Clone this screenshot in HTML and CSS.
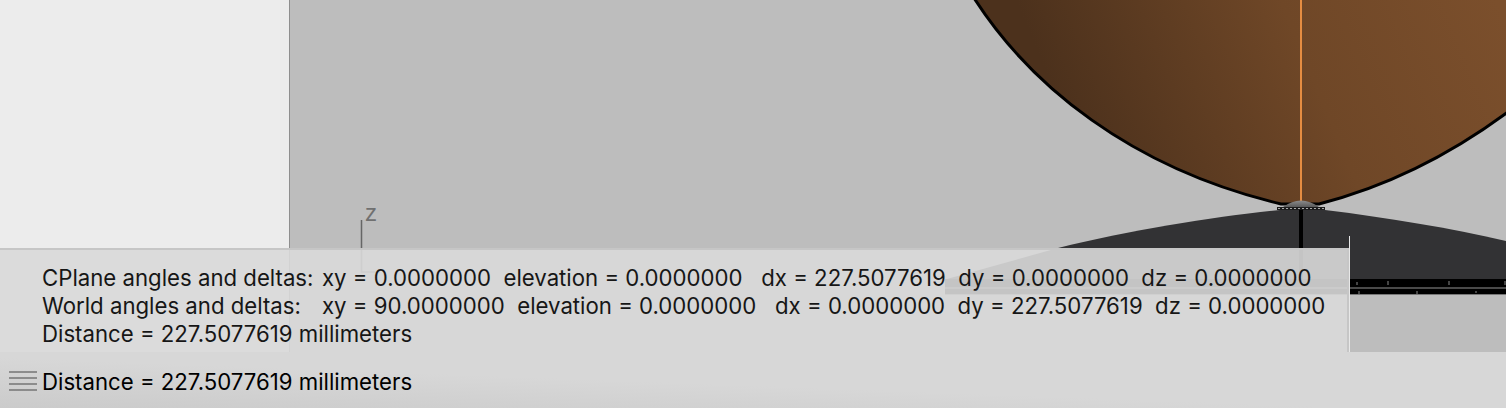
FILE: index.html
```html
<!DOCTYPE html>
<html lang="en">
<head>
  <meta charset="UTF-8">
  <title>Distance</title>
  <link rel="stylesheet" href="styles.css">
</head>
<body>
  <div class="app">
    <div class="workspace">
      <div class="sidebar"></div>

      <!-- Viewport: svg uses page coordinates -->
      <div class="viewport">
        <svg class="scene" viewBox="290 0 1216 352" width="1216" height="352">
          <defs>
            <linearGradient id="bowl" gradientUnits="userSpaceOnUse" x1="1070" y1="130" x2="1480" y2="-40">
              <stop offset="0" stop-color="#4c311c"/>
              <stop offset="0.55" stop-color="#6f4727"/>
              <stop offset="1" stop-color="#7b4f2c"/>
            </linearGradient>
            <linearGradient id="cap" x1="0" y1="0" x2="0" y2="1">
              <stop offset="0" stop-color="#8c8c8c"/>
              <stop offset="1" stop-color="#5a5a5a"/>
            </linearGradient>
          </defs>

          <!-- axis -->
          <path d="M361.500 220V272H380" class="axis"/>
          <text x="365" y="221" class="axis-label">z</text>

          <!-- lower disc and base -->
          <path d="M947 279L1058 248C1130 230 1220 216 1280 210H1325C1390 218 1450 228 1506 241V279Z" fill="#323234"/>
          <rect x="945" y="279" width="561" height="16" fill="#000"/>
          <rect x="945" y="287" width="561" height="2" fill="#4a4a4a"/>
          <rect x="945" y="294" width="561" height="1" fill="#777"/>
          <path d="M1357 282v3M1388 281v4M1449 281v4M1505 281v4M1359 291v3M1417 291v3M1476 291v2" stroke="#888" fill="none"/>
          <rect x="1299" y="208" width="4" height="71" fill="#000"/>

          <!-- bowl -->
          <path d="M974 -2C1030 85 1130 168 1281 204L1319 204C1390 186 1450 155 1508 112V-2Z" fill="url(#bowl)" stroke="#000" stroke-width="3"/>
          <rect x="1300" y="0" width="2" height="201" fill="#e58d42"/>

          <!-- hub -->
          <path d="M1283 207Q1301 194 1319 207Z" fill="url(#cap)"/>
          <rect x="1277" y="207" width="48" height="3" fill="#1c1c1c"/>
          <path d="M1278 208.500H1324" stroke="#aaa" stroke-dasharray="2 2" fill="none"/>
        </svg>
      </div>

      <!-- Command history overlay -->
      <div class="history">
        <p class="history-line"><span class="history-label">CPlane angles and deltas:</span>xy = 0.0000000  elevation = 0.0000000   dx = 227.5077619  dy = 0.0000000  dz = 0.0000000</p>
        <p class="history-line"><span class="history-label">World angles and deltas:</span>xy = 90.0000000  elevation = 0.0000000   dx = 0.0000000  dy = 227.5077619  dz = 0.0000000</p>
        <p class="history-line">Distance = 227.5077619 millimeters</p>
      </div>
      <div class="history-edge"></div>
    </div>

    <div class="statusbar">
      <svg class="menu-icon" viewBox="0 0 28 20" width="28" height="20">
        <path d="M0 1H28M0 7H28M0 13H28M0 19H28" stroke="#757575" stroke-width="1.500" fill="none"/>
      </svg>
      <span class="status-text">Distance = 227.5077619 millimeters</span>
    </div>
  </div>
</body>
</html>
```
FILE: styles.css
```css
body {
  margin: 0;
  font-family: Inter, "Liberation Sans", Arial, sans-serif;
  font-size: 22.2px;
  color: #000;
  overflow: hidden;
}

.app {
  display: flex;
  flex-direction: column;
  height: 408px;
}

.workspace {
  position: relative;
  display: flex;
  height: 352px;
}

.sidebar {
  width: 289px;
  background-color: #ececec;
  border-right: 1px solid #8e8e8e;
}

.viewport {
  position: relative;
  flex: 1;
  background-color: #bdbdbd;
  overflow: hidden;
}

.scene {
  display: block;
}

.axis {
  stroke: #666;
  stroke-width: 1.5;
  fill: none;
}

.axis-label {
  font-family: "Liberation Sans", Arial, sans-serif;
  font-size: 24px;
  fill: #707070;
}

/* Panneau translucide au dessus de la vue */
.history {
  position: absolute;
  left: 0;
  bottom: 0;
  box-sizing: border-box;
  width: 1349px;
  height: 104px;
  padding: 14px 0 0 42px;
  background-color: rgba(217, 217, 217, 0.9);
  border-top: 2px solid #c6c6c6;
  border-right: 2px solid #c6c6c6;
}

.history-line {
  margin: 0;
  line-height: 28px;
  white-space: pre;
  color: #161616;
}

.history-label {
  display: inline-block;
  width: 280px;
}

.history-edge {
  position: absolute;
  left: 1349px;
  top: 236px;
  width: 1px;
  height: 116px;
  background-color: #e8e8e8;
}

.statusbar {
  display: flex;
  align-items: center;
  gap: 5px;
  flex: 1;
  padding-left: 9px;
  background: linear-gradient(to top right, #cbcbcb, #d7d7d7 45%);
}

.menu-icon {
  flex: none;
  margin-top: 2px;
}

.status-text {
  margin-top: 4px;
  line-height: 28px;
}
```
